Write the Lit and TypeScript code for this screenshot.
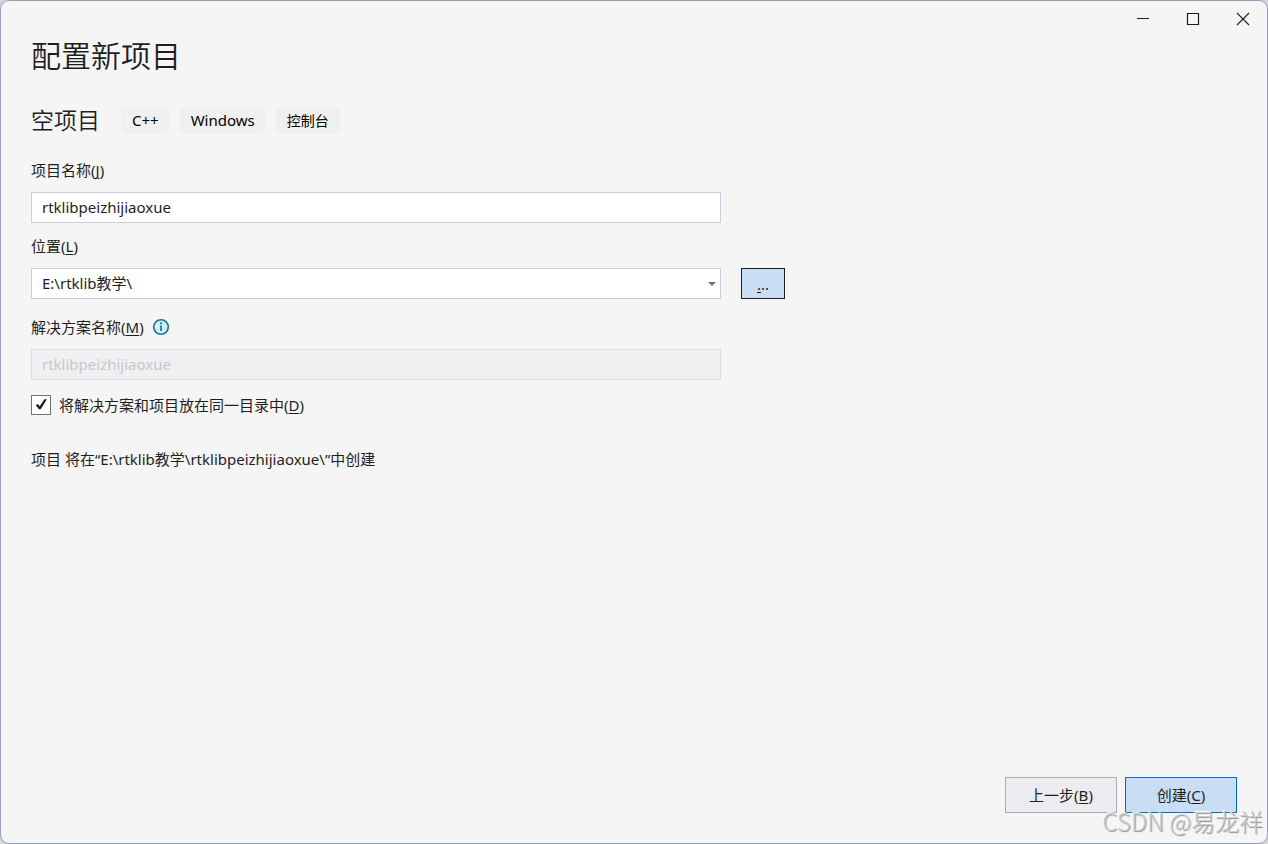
import { LitElement, html, css } from "lit";
import { customElement, state } from "lit/decorators.js";

@customElement("app-root")
export class AppRoot extends LitElement {
  @state() private projectName = "rtklibpeizhijiaoxue";
  @state() private location = "E:\\rtklib教学\\";
  @state() private sameFolder = true;

  private tags = [
    { text: "C++", lang: "en" },
    { text: "Windows", lang: "en" },
    { text: "控制台", lang: "zh" },
  ];

  static styles = css`
    :host {
      display: block;
      min-height: 100vh;
      background: #d3d5d7;
      color: #1e1e1e;
      font-family: "Noto Sans", "Noto Sans CJK SC", sans-serif;
      font-size: 15px;
      line-height: 20px;
    }
    * {
      box-sizing: border-box;
    }
    button,
    input,
    select {
      margin: 0;
      color: inherit;
      font: inherit;
    }
    .window {
      display: flex;
      flex-direction: column;
      min-height: 100vh;
      border: 1px solid #999ebd;
      border-radius: 9px;
      background: #f5f5f5;
    }
    .titlebar {
      display: flex;
      justify-content: flex-end;
      gap: 2px;
      height: 36px;
    }
    .caption {
      display: flex;
      align-items: center;
      justify-content: center;
      width: 48px;
      padding: 0;
      border: 0;
      background: none;
    }
    .content {
      flex: 1;
      padding: 0 30px;
    }
    h1 {
      margin: 0 0 32px;
      font-size: 30px;
      font-weight: 350;
      line-height: 38px;
    }
    .template {
      display: flex;
      align-items: center;
      gap: 21px;
      margin-bottom: 26px;
    }
    h2 {
      margin: 0;
      font-size: 23px;
      font-weight: 350;
      line-height: 27px;
    }
    .tags {
      display: flex;
      gap: 10px;
      margin: 0;
      padding: 0;
      list-style: none;
    }
    .tag {
      padding: 0 11px;
      border-radius: 5px;
      background: #f0f0f0;
      color: #000;
      line-height: 27px;
    }
    .tag:lang(zh) {
      font-size: 14px;
    }
    .form {
      display: grid;
      grid-template-columns: minmax(0, 690px) 44px;
      column-gap: 20px;
    }
    .caption-row {
      grid-column: 1 / -1;
      display: flex;
      align-items: center;
      gap: 8px;
      margin-bottom: 12px;
    }
    .field {
      grid-column: 1;
      width: 100%;
      height: 31px;
      margin-bottom: 13px;
      padding: 0 10px 2px;
      border: 1px solid #ccccdf;
      border-radius: 0;
      outline: none;
      background: #fff;
    }
    .field:disabled {
      border-color: #dcdce6;
      background: #f0f0f2;
      color: #c6c6ca;
      opacity: 1;
    }
    .combo {
      display: grid;
      align-items: start;
      margin-bottom: 5px;
    }
    .combo > * {
      grid-area: 1 / 1;
    }
    .combo select {
      appearance: none;
    }
    .arrow {
      justify-self: end;
      margin: 14px 5px 0 0;
      pointer-events: none;
    }
    .browse {
      height: 31px;
      padding: 0;
      border: 1px solid #1e1e1e;
      background: #c9def5;
    }
    u {
      text-underline-offset: 2px;
      text-decoration-thickness: 1px;
    }
    .check {
      display: flex;
      align-items: center;
      gap: 8px;
      margin-bottom: 32px;
      line-height: 24px;
    }
    .box {
      display: grid;
      width: 20px;
      height: 20px;
    }
    .box > * {
      grid-area: 1 / 1;
    }
    .box input {
      appearance: none;
      width: 20px;
      height: 20px;
      border: 1px solid #717171;
      background: #fff;
    }
    .box svg {
      pointer-events: none;
    }
    .box input:not(:checked) + svg {
      visibility: hidden;
    }
    .result {
      margin: 0;
    }
    .footer {
      display: flex;
      justify-content: flex-end;
      gap: 8px;
      padding: 30px;
    }
    .action {
      width: 112px;
      height: 36px;
      padding: 0;
      border: 1px solid #acacac;
      background: #ececf0;
    }
    .primary {
      border-color: #006cbe;
      background: #c9def5;
    }
    .watermark {
      position: absolute;
      right: 5px;
      bottom: 6px;
      color: #cecece;
      font-family: "Noto Sans CJK SC", sans-serif;
      font-size: 24px;
      font-weight: 300;
      line-height: 34px;
      text-shadow:
        1px 1px 1px #8c8c8c,
        -1px -1px 1px #fff;
      pointer-events: none;
    }
  `;

  render() {
    return html`
      <div class="window">
        <header class="titlebar">
          <button class="caption" aria-label="最小化">
            <svg width="14" height="14" fill="none" stroke="#1e1e1e">
              <path d="M1 6.5H13" />
            </svg>
          </button>
          <button class="caption" aria-label="最大化">
            <svg width="14" height="14" fill="none" stroke="#1e1e1e" stroke-width="1.2">
              <path d="M1.5 1.5H12.5V12.5H1.5Z" />
            </svg>
          </button>
          <button class="caption" aria-label="关闭">
            <svg width="14" height="14" fill="none" stroke="#1e1e1e" stroke-width="1.1">
              <path d="M1 1L13 13M13 1L1 13" />
            </svg>
          </button>
        </header>
        <main class="content">
          <h1>配置新项目</h1>
          <div class="template">
            <h2>空项目</h2>
            <ul class="tags">
              ${this.tags.map((t) => html`<li class="tag" lang=${t.lang}>${t.text}</li>`)}
            </ul>
          </div>
          <div class="form">
            <div class="caption-row">
              <label for="name">项目名称(<u>J</u>)</label>
            </div>
            <input
              id="name"
              class="field"
              type="text"
              spellcheck="false"
              .value=${this.projectName}
              @input=${(e: Event) => (this.projectName = (e.target as HTMLInputElement).value)}
            />
            <div class="caption-row">
              <label for="location">位置(<u>L</u>)</label>
            </div>
            <div class="combo">
              <select id="location" class="field">
                <option>${this.location}</option>
              </select>
              <svg class="arrow" width="8" height="5" fill="#717171">
                <path d="M0 0H8L4 4Z" />
              </svg>
            </div>
            <button class="browse" aria-label="浏览"><u>.</u>..</button>
            <div class="caption-row">
              <label for="solution">解决方案名称(<u>M</u>)</label>
              <svg width="18" height="18" fill="none" role="img" aria-label="信息">
                <circle cx="9" cy="9" r="7.3" fill="#dcebf0" stroke="#077ca5" stroke-width="1.6" />
                <path d="M9 7.5V13" stroke="#077ca5" stroke-width="1.7" />
                <circle cx="9" cy="5.3" r="1.1" fill="#077ca5" />
              </svg>
            </div>
            <input id="solution" class="field" type="text" disabled .value=${this.projectName} />
          </div>
          <div class="check">
            <span class="box">
              <input
                id="same"
                type="checkbox"
                .checked=${this.sameFolder}
                @change=${(e: Event) => (this.sameFolder = (e.target as HTMLInputElement).checked)}
              />
              <svg width="20" height="20" fill="#1e1e1e">
                <path d="M4.8 10L7 8.9L8.7 11.2L13.4 4.2H15.9L9.7 14.2H7.9Z" />
              </svg>
            </span>
            <label for="same">将解决方案和项目放在同一目录中(<u>D</u>)</label>
          </div>
          <p class="result">项目 将在“${this.location}${this.projectName}\\”中创建</p>
        </main>
        <footer class="footer">
          <button class="action">上一步(<u>B</u>)</button>
          <button class="action primary">创建(<u>C</u>)</button>
        </footer>
      </div>
      <div class="watermark">CSDN @易龙祥</div>
    `;
  }
}
